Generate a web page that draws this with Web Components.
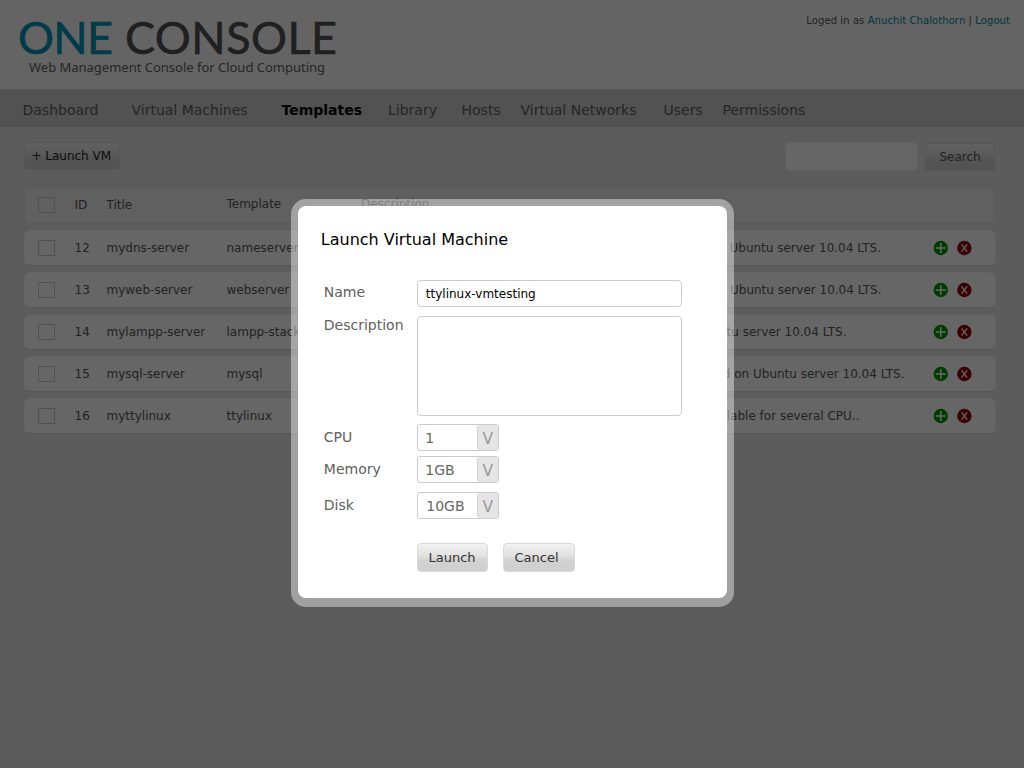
<!DOCTYPE html>
<html lang="en">
<head>
<meta charset="utf-8">
<title>One Console</title>
<style>
html,body{margin:0;height:100%;overflow:hidden;background:#e6e6e6}
body{font-family:"DejaVu Sans",sans-serif;font-size:12px;color:#555}
</style>
</head>
<body>
<one-console></one-console>
<script>
const define = (name, html) => customElements.define(name, class extends HTMLElement {
  connectedCallback() {
    if (this.shadowRoot) return;
    const t = document.createElement('template');
    t.innerHTML = typeof html === 'function' ? html(this) : html;
    this.attachShadow({ mode: 'open' }).append(t.content.cloneNode(true));
  }
});

define('brand-logo', `<style>
:host{display:block;width:330px;height:70px}
svg{display:block;overflow:visible}
text{font-family:Lato,sans-serif}
.tag{font-family:"Noto Sans",sans-serif}
</style>
<svg width="330" height="70">
<text x="-1" y="44.5" font-size="45" fill="#0094b8" stroke="#0094b8" stroke-width=".6" textLength="95">ONE</text>
<text x="106" y="44.5" font-size="45" fill="#505050" stroke="#505050" stroke-width=".6" textLength="212">CONSOLE</text>
<text class="tag" x="10" y="63" font-size="13" fill="#606060" textLength="296">Web Management Console for Cloud Computing</text>
</svg>`);

define('user-status', `<style>
:host{display:block;font-size:10px;line-height:12px;letter-spacing:.08px;color:#555;white-space:pre}
a{color:#0088a8}
</style>Loged in as <a>Anuchit Chalothorn</a> | <a>Logout</a>`);

define('nav-item', `<style>
:host{display:block;font-size:14px;line-height:18px;color:#5c5c5c;white-space:nowrap}
:host([active]){color:#000;font-weight:bold}
</style><slot></slot>`);

define('main-nav', `<style>
:host{display:grid;box-sizing:border-box;height:38px;padding:11px 0 0 22.5px;background:#cdcdcd;border-top:1px solid #dedede;
grid-template-columns:109px 150px 106.5px 73.5px 59px 143px 59px auto;justify-content:start}
</style>
<nav-item>Dashboard</nav-item><nav-item>Virtual Machines</nav-item><nav-item active>Templates</nav-item><nav-item>Library</nav-item><nav-item>Hosts</nav-item><nav-item>Virtual Networks</nav-item><nav-item>Users</nav-item><nav-item>Permissions</nav-item>`);

define('push-button', `<style>
:host{display:block;box-sizing:border-box;height:28px;line-height:var(--line,27px);text-align:center;font-size:var(--size,12px);
color:#333;border:1px solid #d6d6d6;border-radius:4px;background:linear-gradient(#f2f2f2,#e0e0e0 45%,#d2d2d2 60%,#cecece);white-space:nowrap}
</style><slot></slot>`);

define('check-box', `<style>:host{display:block;box-sizing:border-box;width:17px;height:16px;border:1px solid #cacaca}</style>`);

define('row-actions', `<style>:host{display:block}svg{display:block}</style>
<svg width="40" height="16">
<circle cx="7.8" cy="8" r="7.2" fill="#009400"/><path d="M2.8 8h10M7.8 3v10" stroke="#fff" stroke-width="1.5"/>
<circle cx="31.4" cy="8" r="7.2" fill="#900000"/><path d="M28.6 4.4l5.6 7.2M34.2 4.4l-5.6 7.2" stroke="#fff" stroke-width="1.3"/>
</svg>`);

define('vm-row', el => `<style>
:host{display:grid;box-sizing:border-box;height:36px;border:1px solid #f4f4f4;border-bottom-color:#d8d8d8;border-radius:6px;background:#fff;
grid-template-columns:35.5px 32px 120px 134.5px 573px auto;padding-left:14px;line-height:14px;white-space:nowrap;color:#555}
:host([head]){background:#f1f1f1;border-color:#e0e0e0}
check-box{margin:9px 0 0 -1px}
.id,.t,.p,.d{padding-top:10px}
:host([head]) .p,:host([head]) .d{padding-top:9px}
.d{text-align:right;padding-right:var(--end,0)}
:host([head]) .d{text-align:left}
row-actions{margin:9px 0 0 -1px}
</style>
<check-box></check-box><span class="id"><slot name="id"></slot></span><span class="t"><slot name="title"></slot></span>
<span class="p"><slot name="template"></slot></span><span class="d"><slot name="description"></slot></span>
${el.hasAttribute('head') ? '' : '<row-actions></row-actions>'}`);

define('vm-table', () => {
  const rows = [
    ['12', 'mydns-server', 'nameserver', 'based on Ubuntu server 10.04 LTS.', 53],
    ['13', 'myweb-server', 'webserver', 'based on Ubuntu server 10.04 LTS.', 52.5],
    ['14', 'mylampp-server', 'lampp-stack', 'based on Ubuntu server 10.04 LTS.', 87.5],
    ['15', 'mysql-server', 'mysql', 'based on Ubuntu server 10.04 LTS.', 29.5],
    ['16', 'myttylinux', 'ttylinux', 'available for several CPU..', 74.5]];
  const cells = r => ['id', 'title', 'template', 'description'].map((n, i) => `<span slot="${n}">${r[i]}</span>`).join('');
  return `<style>:host{display:flex;flex-direction:column;gap:6px}</style>
<vm-row head style="margin-bottom:1px">${cells(['ID', 'Title', 'Template', 'Description'])}</vm-row>` +
    rows.map(r => `<vm-row style="--end:${r[4]}px">${cells(r)}</vm-row>`).join('');
});

define('tool-bar', `<style>
:host{display:flex;height:30px}
.new{width:96px;margin-right:auto;color:#222;text-indent:-1.5px}
.q{box-sizing:border-box;width:133px;height:29px;margin:0 7px 0 0;background:#fff;border:1px solid #eee;border-radius:4px}
.s{width:70px;margin:1px 1px 0 0;color:#555;--line:26px}
</style><push-button class="new">+ Launch VM</push-button><div class="q"></div><push-button class="s">Search</push-button>`);

define('select-field', `<style>
:host{display:flex;box-sizing:border-box;width:82px;height:27px;border:1px solid #ccc;border-radius:3px;background:#fff;font-size:14px;line-height:27px;color:#666}
.v{flex:1;padding-left:var(--in,7.5px)}
.a{width:20px;text-align:center;background:#e5e5e5;border-left:1px solid #d4d4d4;border-radius:3px 2px 2px 3px;font-size:15.5px;line-height:29px;height:25px;color:#999}
</style><span class="v"><slot></slot></span><span class="a">V</span>`);

define('form-line', el => `<style>
:host{display:grid;grid-template-columns:93px auto;justify-content:start;font-size:14px;line-height:18px;color:#606060}
label{padding-top:var(--lt,3px)}
</style><label>${el.getAttribute('label')}</label><slot></slot>`);

define('launch-dialog', `<style>
:host{display:block;box-sizing:border-box;width:443px;height:407.5px;padding:7px;background:rgba(255,255,255,.42);border-radius:15px}
.panel{box-sizing:border-box;height:392px;background:#fff;border-radius:8px;padding:23.5px 0 0 26.3px}
h1{margin:0 0 30px -3px;font-size:16px;font-weight:normal;line-height:20px;color:#000}
.in,.area{box-sizing:border-box;width:265.5px;border:1px solid #ccc;border-radius:4px;background:#fff}
.in{height:27px;padding-left:8px;font-size:12px;line-height:26px;color:#000}
.area{height:100px}
.btns{display:flex;gap:15px;margin:24px 0 0 93px}
push-button{--size:13px;--line:28px;height:29px;width:71.5px;border-color:#d8d8d8}
</style>
<div class="panel"><h1>Launch Virtual Machine</h1>
<form-line label="Name"><div class="in">ttylinux-vmtesting</div></form-line>
<form-line label="Description" style="margin-top:9px;--lt:0px"><div class="area"></div></form-line>
<form-line label="CPU" style="margin-top:8px;--lt:4px"><select-field>1</select-field></form-line>
<form-line label="Memory" style="margin-top:5.5px;--lt:4px"><select-field>1GB</select-field></form-line>
<form-line label="Disk" style="margin-top:8.5px;--lt:4px"><select-field style="--in:8.5px">10GB</select-field></form-line>
<div class="btns"><push-button style="text-indent:-1px">Launch</push-button><push-button style="text-indent:-5px">Cancel</push-button></div>
</div>`);

define('one-console', `<style>
:host{display:block;position:relative;width:1024px;height:768px;overflow:hidden;background:#e6e6e6}
header{display:flex;justify-content:space-between;box-sizing:border-box;height:89px;padding:9px 14px 0 19px;background:#fafafa}
user-status{margin-top:6px}
main{padding:15px 28px 0 24px}
vm-table{margin-top:15px}
.shade{position:absolute;inset:0;display:flex;align-items:flex-start;justify-content:center;padding-top:199.4px;background:rgba(0,0,0,.6)}
</style>
<header><brand-logo></brand-logo><user-status></user-status></header>
<main-nav></main-nav>
<main><tool-bar></tool-bar><vm-table></vm-table></main>
<div class="shade"><launch-dialog></launch-dialog></div>`);
</script>
</body>
</html>
